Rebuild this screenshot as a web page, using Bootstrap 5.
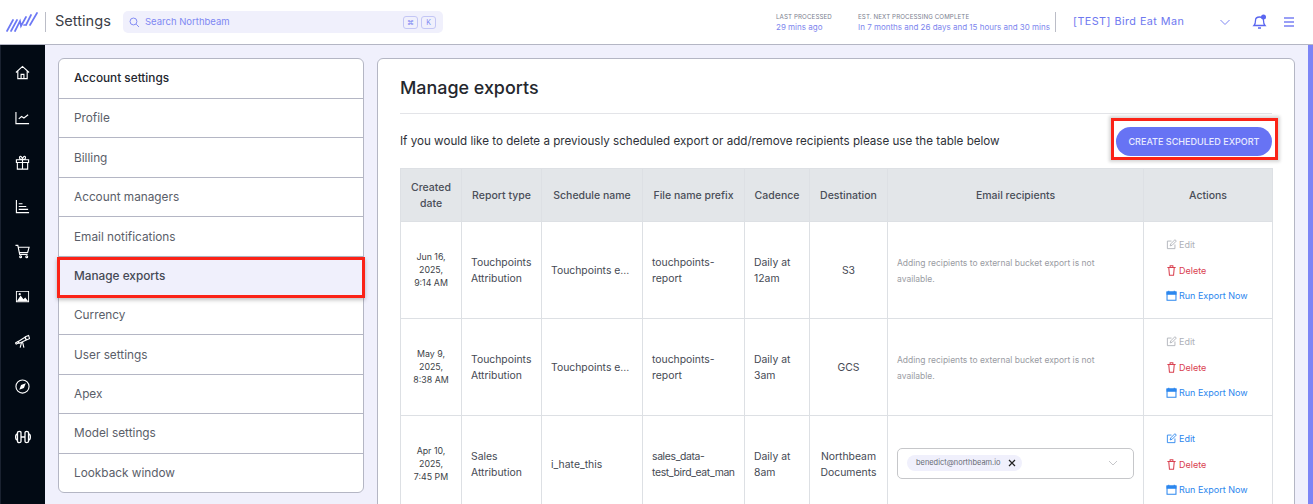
<!doctype html>
<html lang="en"><head><meta charset="utf-8"><title>Manage exports</title>
<link href="https://cdn.jsdelivr.net/npm/bootstrap@5.3.0/dist/css/bootstrap.min.css" rel="stylesheet">
<style>
html,body{height:504px;overflow:hidden}
body{font-family:Inter,"Liberation Sans",sans-serif;color:#3d4250;background:#f0f0fc}
.nb-top{height:45px;background:#fff;border-bottom:1px solid #b4b6c4;padding:0 18px 0 6px}
.nb-divider{width:1px;height:20px;background:#bbbdc7}
.nb-divider-logo{margin-left:7px}
.nb-title{font-size:14.6px;color:#3c4048;margin-left:9px;width:60px}
.nb-search{width:320px;height:22px;background:#f0f0fc;border-radius:5px;padding:0 7px 0 6px;color:#7f88f3;font-size:9.5px}
.nb-search-label{margin-left:5px}
.nb-key{width:15px;height:13px;border:1px solid #c3c6f5;border-radius:3px;font-size:7px;line-height:11px;text-align:center;margin-left:3px}
.nb-meta{font-size:7px;line-height:10px}
.nb-meta b{display:block;font-weight:400;color:#7d8190;font-size:6.2px;letter-spacing:.1px}
.nb-meta span{color:#7d86ee;font-size:8px}
.nb-org{color:#6e78f0;font-size:10.8px;letter-spacing:.45px;width:146px;margin-left:17px}
.nb-bell{margin-left:21px}
.nb-body{height:459px}
.nb-side{width:45px;background:#020a14;border-left:1px solid #1a2230;padding-top:20px;flex:none}
.nb-side svg{display:block;width:15px;height:15px;margin:0 0 29.8px 14px}
.nb-side svg:last-child{width:18px;height:18px;margin:34px 0 0 13px}
.nb-main{padding:13px 13px 0;flex:1;min-width:0;gap:13px}
.nb-scroll{width:5px;background:#7c84f6}
.nb-menu{width:306px;height:435px;border:1px solid #b4b6c4;border-radius:6px;background:#fff;flex:none}
.nb-menu-head{height:40px;padding:0 15px;font-size:11.8px;font-weight:500;color:#23262e;border-bottom:1px solid #b4b6c4;display:flex;align-items:center}
.nb-menu-item{height:39.4px;padding:2px 15px 0;font-size:11.8px;color:#5a5e69;border-bottom:1px solid #b4b6c4;display:flex;align-items:center}
.nb-menu-item:last-child{border-bottom:0}
.nb-active{height:37.4px;margin-top:2px;padding:0 15px;background:#f0f0fc;color:#454954;font-weight:500;outline:3px solid #fb2317;outline-offset:-1px;box-shadow:0 2px 4px 2px rgba(0,0,0,.25);position:relative}
.nb-panel{flex:1;min-width:0;height:520px;background:#fff;border:1px solid #b4b6c4;border-radius:6px;padding:0 22px}
.nb-h{font-size:17.9px;font-weight:500;color:#24272e;padding:17px 0 13px;border-bottom:1px solid #e3e4e8;line-height:24px;margin:0}
.nb-lead{height:54px;font-size:11.63px;color:#2e3138}
.nb-lead-text{padding-top:2px}
.nb-flag{display:flex;padding:6px 3px 1px 2px;outline:3px solid #fb2317;box-shadow:0 0 3px 5px rgba(0,0,0,.16);margin:-4px -3px 0 0}
.nb-btn{width:156px;height:29px;background:#6773f4;border:0;border-radius:15px;color:#e9ebff;font-size:9.05px;font-weight:500;padding:0}
.nb-table{table-layout:fixed;width:872px;margin:0;border-color:#dde0e4;--bs-table-color:#3d4250}
.nb-table th{background:#e3e6e9;font-size:10.5px;font-weight:500;line-height:16px;text-align:center;vertical-align:middle;padding:11px 6px 9px;height:53px;color:#4a4e58}
.nb-table td{font-size:10.4px;line-height:16px;vertical-align:middle;padding:9px 9px 7px;color:#454953;height:97px}
.nb-table td.nb-date{font-size:8.8px;line-height:13px;text-align:center;color:#3c3f47;padding:7px 9px 9px}
.nb-table td.nb-note{font-size:8.5px;line-height:16px;color:#9a9ca3;padding-right:20px}
.nb-tight{letter-spacing:-.35px}
.nb-act{font-size:9px;display:flex;flex-direction:column;gap:10.5px;padding-left:13px;line-height:15px;margin-top:-2px}
.nb-act div{display:flex;align-items:center;gap:2px}
.nb-act svg{width:11px;height:11px;flex:none}
.nb-off{color:#aeb1b8}.nb-red{color:#d9404f}.nb-blue{color:#2b86ee}
.nb-select{height:31px;border:1px solid #c6c7ca;border-radius:5px;padding:0 15px 0 9px;margin-top:-4px}
.nb-chip{height:16px;background:#f0f0fc;border-radius:8px;padding:0 6px 0 9px;font-size:7.45px;color:#666a74;gap:7px}
</style></head><body>
<header class="nb-top d-flex align-items-center">
<svg width="32" height="22" viewBox="0 0 32 22" fill="none" stroke="#6c78f4" stroke-width="1.700" stroke-linecap="round"><path d="M1 20 7 9M5 20 11 9M9 20 14 10 15 15 20 6M20 14 25 4M24 14 31 2M18 14 20 14"/></svg>
<div class="nb-divider nb-divider-logo"></div><div class="nb-title">Settings</div>
<div class="nb-search d-flex align-items-center ms-2">
<svg width="11" height="11" viewBox="0 0 16 16" fill="none" stroke="#7f88f3" stroke-width="1.400"><circle cx="6.500" cy="6.500" r="5"/><path d="m10.500 10.500 4 4"/></svg>
<span class="nb-search-label">Search Northbeam</span><span class="ms-auto nb-key">⌘</span><span class="nb-key">K</span></div>
<div class="ms-auto d-flex align-items-center">
<div class="nb-meta" style="width:82px"><b>LAST PROCESSED</b><span>29 mins ago</span></div>
<div class="nb-meta" style="width:197px"><b>EST. NEXT PROCESSING COMPLETE</b><span>In 7 months and 26 days and 15 hours and 30 mins</span></div>
<div class="nb-divider"></div>
<div class="nb-org">[TEST] Bird Eat Man</div>
<svg width="12" height="12" viewBox="0 0 12 12" fill="none" stroke="#7f88f3"><path d="m1.500 4 4.500 4.500L10.500 4"/></svg>
<svg class="nb-bell" width="15" height="16" viewBox="0 0 15 16" fill="none" stroke="#5a66f0" stroke-width="1.300"><path d="M2 11.500c1.500-1.500 1.500-3 1.500-5s1.500-3.500 4-3.500 4 1.500 4 3.500 0 3.500 1.500 5zM6 14h3"/><circle cx="11.500" cy="3" r="2.500" fill="#5a66f0" stroke="none"/></svg>
<svg class="ms-3" width="12" height="12" viewBox="0 0 12 12" stroke="#7880f4" stroke-width="1.600"><path d="M1 2h10M1 6h10M1 10h10"/></svg>
</div>
</header>
<div class="nb-body d-flex">
<nav class="nb-side">
<svg viewBox="0 0 16 16" fill="none" stroke="#fff" stroke-width="1.200"><path d="M1 8 8 1.500 15 8M3 6.500V14.500H13V6.500M6.500 14.500V10H9.500V14.500"/></svg>
<svg viewBox="0 0 16 16" fill="none" stroke="#fff" stroke-width="1.200"><path d="M1 2V14.500H15M4 9.500 7 7l2.500 1.500L14 5"/></svg>
<svg viewBox="0 0 16 16" fill="none" stroke="#fff" stroke-width="1.200"><path d="M1.500 5H14.500V8H1.500zM2.500 8V15H13.500V8M8 5V15M8 5C6 5 4 4 5 2s3 1 3 3c0-2 2-5 3-3s-1 3-3 3"/></svg>
<svg viewBox="0 0 16 16" fill="none" stroke="#fff" stroke-width="1.200"><path d="M1.500 1V14.500H15M4 5H8M4 8H12M4 11H14"/></svg>
<svg viewBox="0 0 16 16" fill="none" stroke="#fff" stroke-width="1.200"><path d="M0.500 1.500H3L5 11H13.500M3.500 3.500H15L13.500 9H4.500"/><circle cx="6" cy="13.500" r="1"/><circle cx="12.500" cy="13.500" r="1"/></svg>
<svg viewBox="0 0 16 16"><path fill="#fff" fill-rule="evenodd" d="M1 2H15V14H1zM2 3V13H14V3z"/><path fill="#fff" d="M2 13 6 7l3 4 2-2 3 4z"/><circle cx="5" cy="5.500" r="1.200" fill="#fff"/></svg>
<svg viewBox="0 0 16 16" fill="none" stroke="#fff" stroke-width="1.200"><path d="M0.500 9.500 3 8l.8 1.500-2.500 1.300zM3.500 8 10.500 3.500l1.500 3-7.500 3.300zM11 3 14.500 1.500 15.500 5 12 6.500zM7 9l-1.500 5.500M8 8.500 9.500 14.500"/></svg>
<svg viewBox="0 0 16 16" fill="none" stroke="#fff" stroke-width="1.200"><circle cx="8" cy="8" r="7"/><path fill="#fff" stroke="none" d="M11.500 4.500 9.500 9.500 4.500 11.500 6.500 6.500z"/></svg>
<svg viewBox="0 0 18 18" fill="none" stroke="#fff" stroke-width="1.300"><path d="M7 9H11M3.500 4.500c0-1.500 3.500-1.500 3.500 0V13.500c0 1.500-3.500 1.500-3.500 0zM11 4.500c0-1.500 3.500-1.500 3.500 0V13.500c0 1.500-3.500 1.500-3.500 0zM3.500 6C1 6 1 12 3.500 12M14.500 6C17 6 17 12 14.500 12"/></svg>
</nav>
<main class="nb-main d-flex">
<aside class="nb-menu">
<div class="nb-menu-head">Account settings</div>
<div class="nb-menu-item">Profile</div><div class="nb-menu-item">Billing</div><div class="nb-menu-item">Account managers</div><div class="nb-menu-item">Email notifications</div>
<div class="nb-menu-item nb-active">Manage exports</div>
<div class="nb-menu-item">Currency</div><div class="nb-menu-item">User settings</div><div class="nb-menu-item">Apex</div><div class="nb-menu-item">Model settings</div><div class="nb-menu-item">Lookback window</div>
</aside>
<section class="nb-panel">
<h1 class="nb-h">Manage exports</h1>
<div class="nb-lead d-flex align-items-center justify-content-between"><span class="nb-lead-text">If you would like to delete a previously scheduled export or add/remove recipients please use the table below</span><div class="nb-flag"><button class="nb-btn">CREATE SCHEDULED EXPORT</button></div></div>
<table class="table table-bordered nb-table">
<colgroup><col style="width:61px"><col style="width:80px"><col style="width:101px"><col style="width:102px"><col style="width:65px"><col style="width:78px"><col style="width:256px"><col style="width:129px"></colgroup>
<thead><tr><th>Created date</th><th>Report type</th><th>Schedule name</th><th>File name prefix</th><th>Cadence</th><th>Destination</th><th>Email recipients</th><th>Actions</th></tr></thead>
<tbody>
<tr><td class="nb-date">Jun 16, 2025, 9:14 AM</td><td>Touchpoints Attribution</td><td>Touchpoints e...</td><td>touchpoints-report</td><td>Daily at 12am</td><td class="text-center">S3</td><td class="nb-note">Adding recipients to external bucket export is not available.</td>
<td><div class="nb-act"><div class="nb-off"><svg viewBox="0 0 16 16" fill="none" stroke="currentColor" stroke-width="1.300"><path d="M8 3H2V14H13V8M6 10l1-3 6-6 2 2-6 6z"/></svg>Edit</div><div class="nb-red"><svg viewBox="0 0 16 16" fill="none" stroke="currentColor" stroke-width="1.500"><path d="M2 3.500H14M4 3.500 5 15H11L12 3.500M6 3.500V1H10V3.500"/></svg>Delete</div><div class="nb-blue"><svg viewBox="0 0 16 16" fill="none" stroke="currentColor" stroke-width="1.500"><path d="M1.500 3H14.500V15H1.500zM4 1V3M12 1V3"/><path fill="currentColor" d="M1.500 3H14.500V6H1.500z"/></svg>Run Export Now</div></div></td></tr>
<tr><td class="nb-date">May 9, 2025, 8:38 AM</td><td>Touchpoints Attribution</td><td>Touchpoints e...</td><td>touchpoints-report</td><td>Daily at 3am</td><td class="text-center">GCS</td><td class="nb-note">Adding recipients to external bucket export is not available.</td>
<td><div class="nb-act"><div class="nb-off"><svg viewBox="0 0 16 16" fill="none" stroke="currentColor" stroke-width="1.300"><path d="M8 3H2V14H13V8M6 10l1-3 6-6 2 2-6 6z"/></svg>Edit</div><div class="nb-red"><svg viewBox="0 0 16 16" fill="none" stroke="currentColor" stroke-width="1.500"><path d="M2 3.500H14M4 3.500 5 15H11L12 3.500M6 3.500V1H10V3.500"/></svg>Delete</div><div class="nb-blue"><svg viewBox="0 0 16 16" fill="none" stroke="currentColor" stroke-width="1.500"><path d="M1.500 3H14.500V15H1.500zM4 1V3M12 1V3"/><path fill="currentColor" d="M1.500 3H14.500V6H1.500z"/></svg>Run Export Now</div></div></td></tr>
<tr><td class="nb-date">Apr 10, 2025, 7:45 PM</td><td>Sales Attribution</td><td>i_hate_this</td><td class="nb-tight">sales_data-test_bird_eat_man</td><td>Daily at 8am</td><td class="text-center">Northbeam Documents</td>
<td><div class="nb-select d-flex align-items-center justify-content-between"><span class="nb-chip d-flex align-items-center">benedict@northbeam.io<svg width="8" height="8" viewBox="0 0 8 8" stroke="#222" stroke-width="1.200"><path d="m1 1 6 6M7 1 1 7"/></svg></span><svg width="10" height="10" viewBox="0 0 10 10" fill="none" stroke="#c6c7ca"><path d="m1 3 4 4 4-4"/></svg></div></td>
<td><div class="nb-act"><div class="nb-blue"><svg viewBox="0 0 16 16" fill="none" stroke="currentColor" stroke-width="1.300"><path d="M8 3H2V14H13V8M6 10l1-3 6-6 2 2-6 6z"/></svg>Edit</div><div class="nb-red"><svg viewBox="0 0 16 16" fill="none" stroke="currentColor" stroke-width="1.500"><path d="M2 3.500H14M4 3.500 5 15H11L12 3.500M6 3.500V1H10V3.500"/></svg>Delete</div><div class="nb-blue"><svg viewBox="0 0 16 16" fill="none" stroke="currentColor" stroke-width="1.500"><path d="M1.500 3H14.500V15H1.500zM4 1V3M12 1V3"/><path fill="currentColor" d="M1.500 3H14.500V6H1.500z"/></svg>Run Export Now</div></div></td></tr>
</tbody></table>
</section>
</main>
<div class="nb-scroll"></div>
</div>
<script src="https://cdn.jsdelivr.net/npm/bootstrap@5.3.0/dist/js/bootstrap.bundle.min.js"></script>
</body></html>
